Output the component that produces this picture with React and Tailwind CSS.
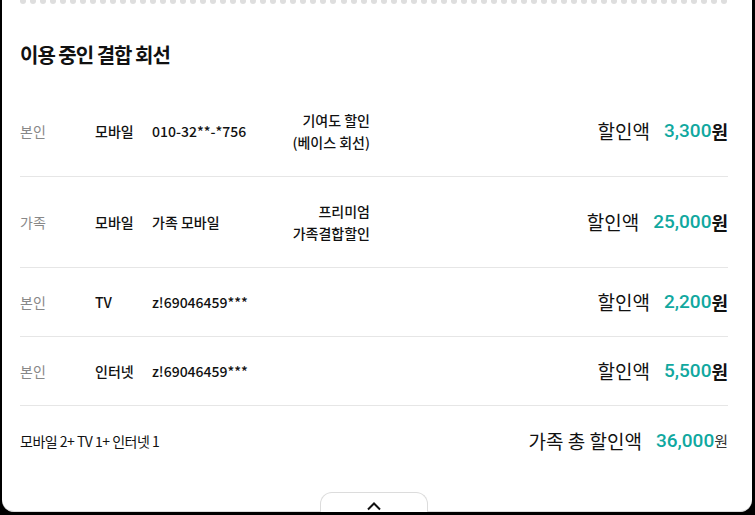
import React from "react";

const rows = [
  { who: "본인", type: "모바일", num: "010-32**-*756", disc: ["기여도 할인", "(베이스 회선)"], amt: "3,300" },
  { who: "가족", type: "모바일", num: "가족 모바일", disc: ["프리미엄", "가족결합할인"], amt: "25,000" },
  { who: "본인", type: "TV", num: "z!69046459***", disc: [], amt: "2,200" },
  { who: "본인", type: "인터넷", num: "z!69046459***", disc: [], amt: "5,500" },
];

export default function App() {
  const dots = Array.from({ length: 71 });
  return (
    <div
      className="w-[755px] h-[515px] bg-black pl-[2px] pr-[3px] pb-[3px] overflow-hidden"
      style={{ fontFamily: '"Noto Sans CJK KR", "Noto Sans", sans-serif' }}
    >
      <div className="relative h-full bg-white rounded-b-[12px] border-b border-[#dcdcdc] pl-[18px] pr-[24px]">
        <div className="flex justify-between h-[4px] overflow-hidden">
          {dots.map((_, i) => (
            <span key={i} className="block w-[6px] h-[6px] rounded-full bg-[#dedede] -mt-[2px] shrink-0" />
          ))}
        </div>
        <h2 className="pt-[36px] text-[20px] leading-[30px] font-bold text-[#111] tracking-[-1px]">
          이용 중인 결합 회선
        </h2>
        <div className="mt-[16px]">
          {rows.map((r, i) => (
            <div key={i} className="flex items-center py-[23px] border-b border-[#e6e6e6] text-[14px] leading-[22px] text-[#111]">
              <div className="w-[75px] text-[#888]">{r.who}</div>
              <div className="w-[57px] font-medium">{r.type}</div>
              <div className="w-[130px] font-medium">{r.num}</div>
              <div className="w-[88px] text-right font-medium">
                {r.disc.map((d, j) => (
                  <div key={j}>{d}</div>
                ))}
              </div>
              <div className="ml-auto flex items-center text-[19px] leading-[22px]">
                <span className="text-[#111]">할인액</span>
                <span className="ml-[14px] font-medium text-[#10a89f]" style={{ fontFamily: 'Roboto, "Noto Sans CJK KR", sans-serif' }}>{r.amt}</span>
                <span className="font-bold text-[#111] text-[18px]">원</span>
              </div>
            </div>
          ))}
        </div>
        <div className="flex items-center pt-[24px] text-[14px] leading-[22px] text-[#111]">
          <div className="tracking-[-0.5px]">모바일 2+ TV 1+ 인터넷 1</div>
          <div className="ml-auto flex items-center">
            <span className="text-[19px]">가족 총 할인액</span>
            <span className="ml-[14px] text-[19px] font-medium text-[#10a89f]" style={{ fontFamily: 'Roboto, "Noto Sans CJK KR", sans-serif' }}>36,000</span>
            <span className="text-[15px] text-[#333]">원</span>
          </div>
        </div>
        <div className="absolute left-[318px] bottom-[-1px] w-[108px] h-[20px] bg-white border border-b-0 border-[#dcdcdc] rounded-t-[12px] flex justify-center pt-[8px]">
          <svg width="16" height="10" viewBox="0 0 16 10" fill="none">
            <path d="M2 8.5 L8 2.5 L14 8.5" stroke="#111" strokeWidth="2" />
          </svg>
        </div>
      </div>
    </div>
  );
}
